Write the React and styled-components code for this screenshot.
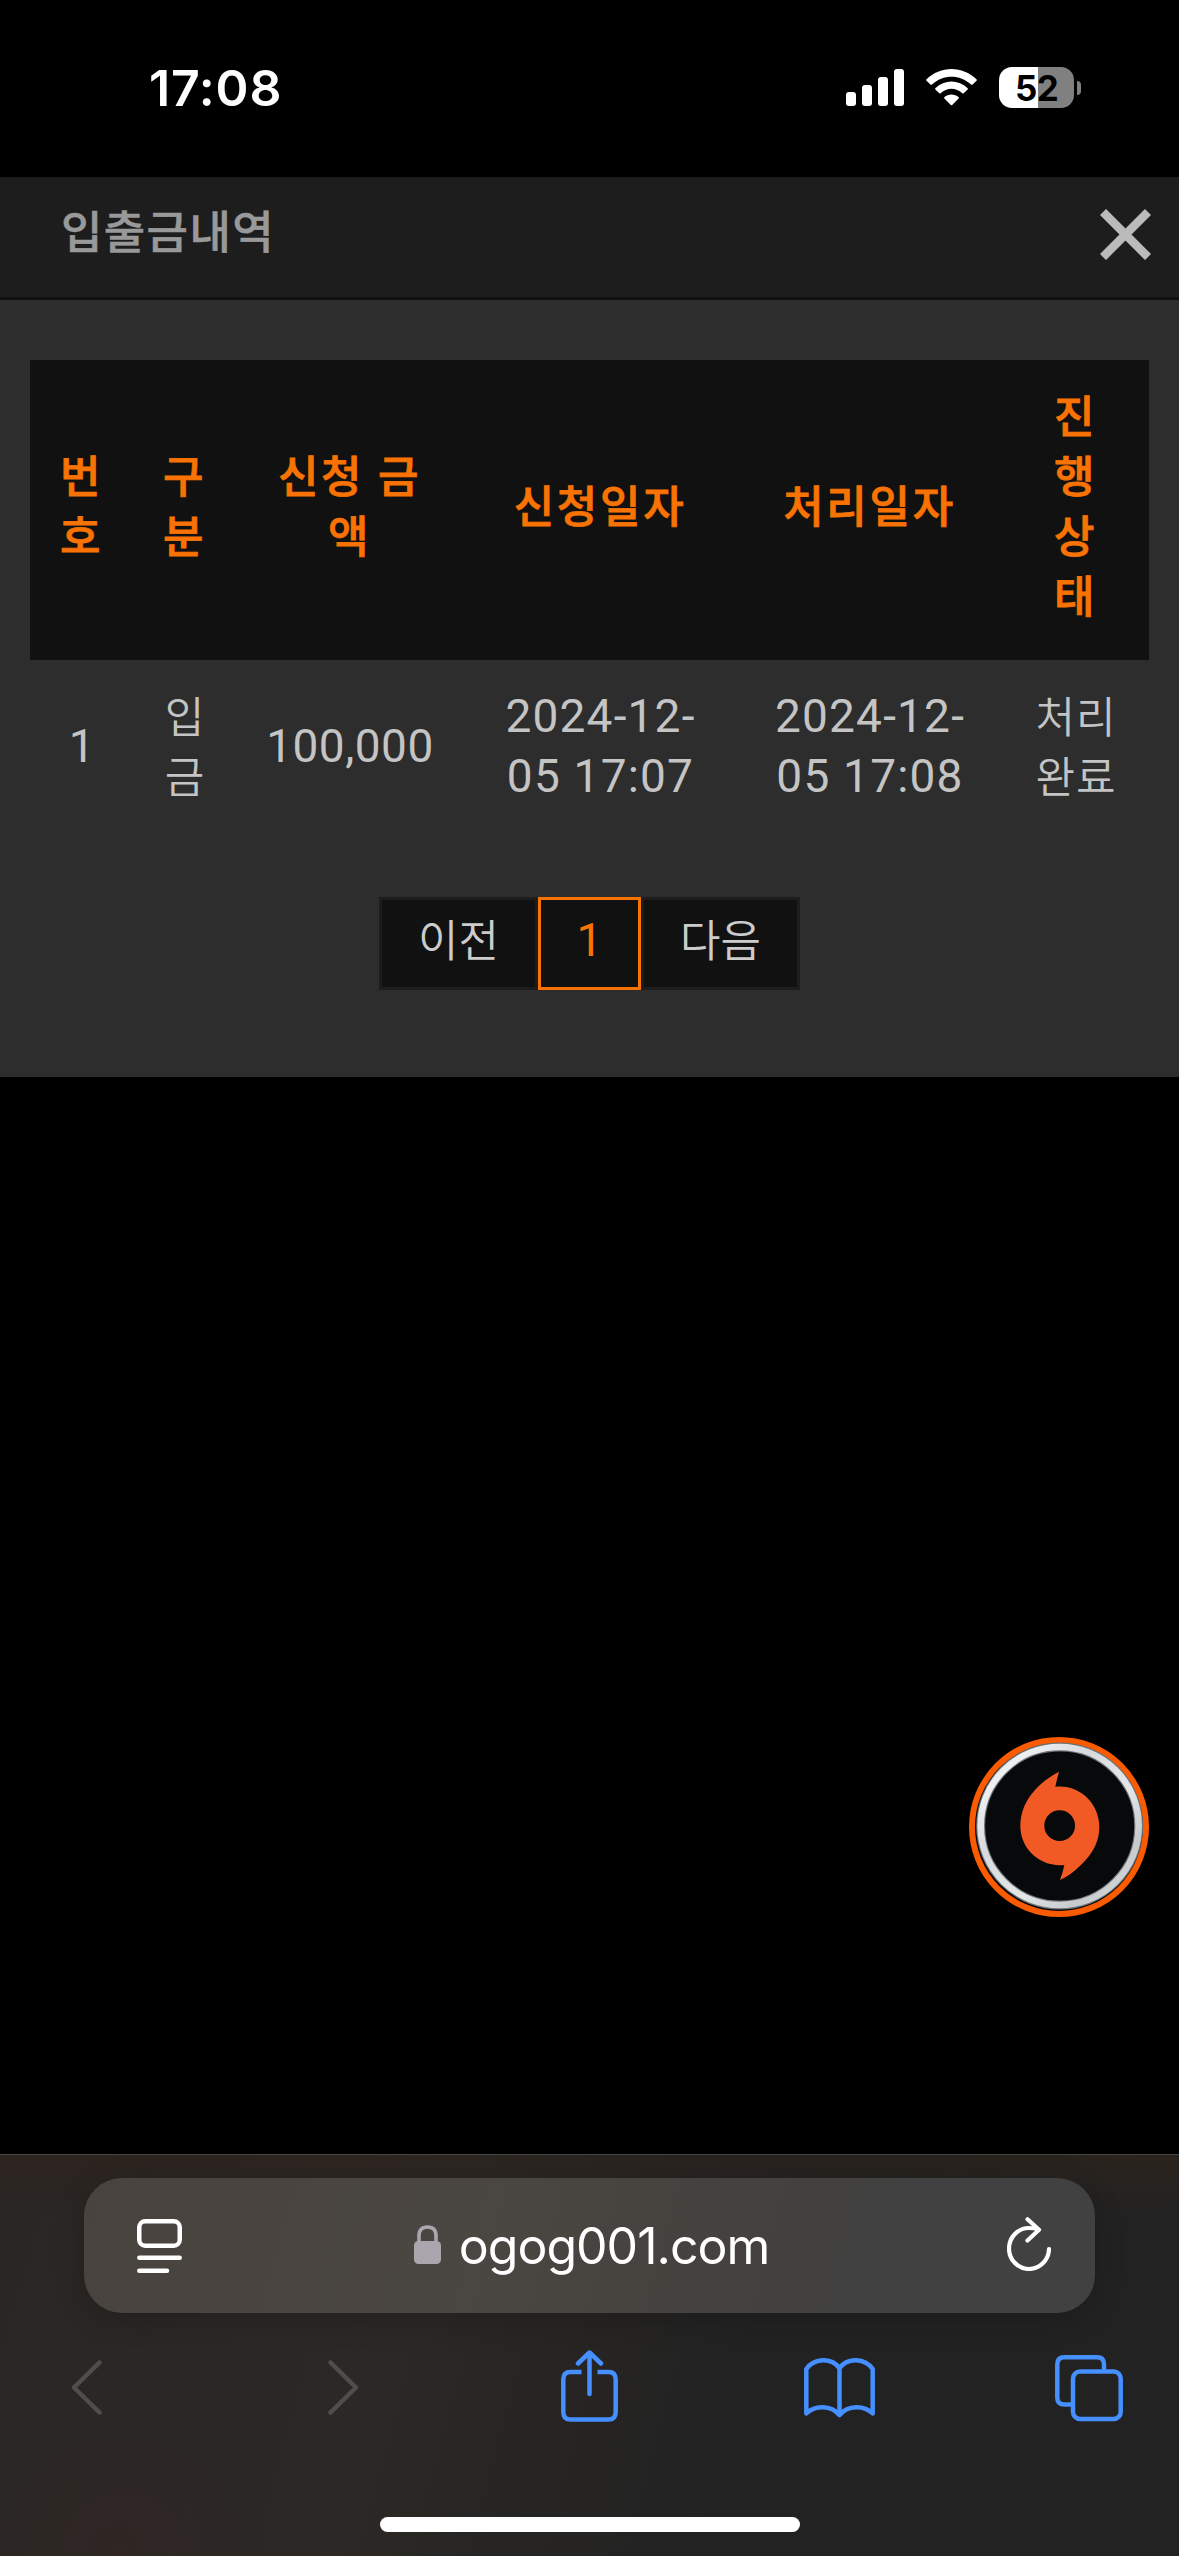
import React from "react";
import styled, { createGlobalStyle } from "styled-components";

const GlobalStyle = createGlobalStyle`
  * { box-sizing: border-box; }
  html, body { margin: 0; background: #000; }
  svg { display: block; }
`;

const Screen = styled.div`
  position: relative;
  display: flex;
  flex-direction: column;
  width: 1179px;
  height: 2556px;
  overflow: hidden;
  background: #000;
  font-family: Roboto, "Noto Sans CJK KR", sans-serif;
`;

/* ---------- status bar ---------- */
const StatusBar = styled.div`
  display: flex;
  justify-content: space-between;
  flex: none;
  height: 177px;
  padding: 67px 98px 0 149px;
`;

const Clock = styled.div`
  font: 600 50px/42px Inter, sans-serif;
  letter-spacing: 0.8px;
  color: #fff;
`;

const StatusIcons = styled.div`
  display: flex;
  align-items: flex-start;
  height: 41px;
`;

const SignalIcon = styled.svg`
  width: 58px;
  height: 41px;
  margin-right: 22px;
`;

const WifiIcon = styled.svg`
  width: 51px;
  height: 41px;
  margin-right: 22px;
`;

const Battery = styled.div`
  width: 75px;
  height: 41px;
  border-radius: 13px;
  background: linear-gradient(90deg, #fff 39px, #808080 39px);
  font: 700 35px/42px Inter, sans-serif;
  letter-spacing: -0.8px;
  text-align: center;
  color: #000;
`;

const BatteryTip = styled.div`
  width: 4px;
  height: 14px;
  margin: 14px 0 0 3px;
  border-radius: 0 4px 4px 0;
  background: #808080;
`;

/* ---------- page ---------- */
const Header = styled.header`
  display: flex;
  align-items: center;
  justify-content: space-between;
  flex: none;
  height: 123px;
  padding: 0 28px 6px 61px;
  border-bottom: 3px solid #111;
  background: #1d1d1d;
`;

const Title = styled.h1`
  margin: 0;
  font-size: 45px;
  font-weight: 500;
  line-height: 60px;
  letter-spacing: 1.4px;
  color: #999;
  -webkit-text-stroke: 0.5px #999;
`;

const CloseIcon = styled.svg`
  width: 51px;
  height: 51px;
`;

const Panel = styled.main`
  flex: none;
  height: 777px;
  padding: 60px 30px 0;
  background: #2d2d2d;
`;

const Table = styled.table`
  width: 1119px;
  table-layout: fixed;
  border-collapse: collapse;
  text-align: center;
  line-height: 60px;
`;

const Line = styled.div`
  white-space: nowrap;
`;

const HeadCell = styled.th`
  padding: 28px 0 32px 1px;
  background: #111;
  color: #f97304;
  font-size: 44px;
  font-weight: 500;
  letter-spacing: 2.7px;
  -webkit-text-stroke: 0.8px #f97304;
`;

const spacing = { hangul: "1px", amount: "0.5px", date: "1.2px" };

const Cell = styled.td`
  padding: ${(p) => (p.$kind === "hangul" ? "28px 0 32px 2px" : "26px 0 34px 2px")};
  color: #c4c4c4;
  font-size: ${(p) => (p.$kind === "hangul" ? 43 : 46)}px;
  font-weight: ${(p) => (p.$kind === "hangul" ? 350 : 400)};
  letter-spacing: ${(p) => spacing[p.$kind]};
`;

const Pagination = styled.nav`
  display: flex;
  justify-content: center;
  margin-top: 57px;
`;

const PageButton = styled.button`
  width: ${(p) => (p.$active ? 103 : 159)}px;
  height: 93px;
  padding: 0 0 ${(p) => (p.$active ? 7 : 3)}px;
  border: 3px solid ${(p) => (p.$active ? "#f97304" : "#1d1d1d")};
  background: #111;
  color: ${(p) => (p.$active ? "#f97304" : "#ccc")};
  font-family: inherit;
  font-size: ${(p) => (p.$active ? 46 : 44)}px;
  font-weight: ${(p) => (p.$active ? 400 : 350)};
  line-height: 60px;
`;

/* ---------- floating button ---------- */
const FloatingButton = styled.button`
  position: absolute;
  top: 1737px;
  left: 969px;
  width: 180px;
  height: 180px;
  padding: 0;
  border: 0;
  border-radius: 50%;
  background: none;
`;

/* ---------- browser chrome ---------- */
const BrowserBar = styled.footer`
  flex: none;
  height: 402px;
  margin-top: auto;
  border-top: 1px solid #474441;
  background:
    radial-gradient(circle 150px at 120px 400px, rgba(54, 38, 37, 0.5), transparent),
    radial-gradient(ellipse 1000px 60px at 100px 0, rgba(48, 34, 26, 0.5), transparent),
    radial-gradient(ellipse 700px 60px at 1179px 0, rgba(48, 36, 26, 0.6), transparent),
    linear-gradient(105deg, #292624 0%, #2b2825 35%, #222 62%, #222 100%);
`;

const AddressBar = styled.div`
  display: flex;
  align-items: center;
  justify-content: space-between;
  width: 1011px;
  height: 135px;
  margin: 23px 84px 0;
  padding: 0 44px 0 53px;
  border-radius: 38px;
  background: linear-gradient(105deg, #48433f 0%, #4a4641 40%, #45413e 60%, #414141 78%);
  box-shadow: 0 6px 30px rgba(0, 0, 0, 0.2);
`;

const Site = styled.div`
  display: flex;
  align-items: center;
  gap: 18px;
  margin-right: 6px;
  color: #fff;
  font: 400 50px/60px Inter, sans-serif;
  letter-spacing: -1px;
`;

const Glyph = styled.svg`
  width: ${(p) => p.$w}px;
  height: ${(p) => p.$h}px;
  margin-top: ${(p) => p.$top || 0}px;
  fill: none;
  stroke: ${(p) => p.$color || "#fff"};
  stroke-width: ${(p) => p.$stroke || 4.5};
  stroke-linecap: round;
  stroke-linejoin: round;
`;

const Toolbar = styled.div`
  display: grid;
  grid-template-columns: 257px 233px 243px 251px 68px;
  height: 74px;
  margin: 36px 0 0 71px;
`;

const HomeIndicator = styled.div`
  width: 420px;
  height: 15px;
  margin: 94px 0 0 380px;
  border-radius: 8px;
  background: #fff;
`;

const columns = [
  { width: 102, kind: "amount", head: ["번", "호"] },
  { width: 104, kind: "hangul", head: ["구", "분"] },
  { width: 226, kind: "amount", head: ["신청 금", "액"] },
  { width: 275, kind: "date", head: ["신청일자"] },
  { width: 264, kind: "date", head: ["처리일자"] },
  { width: 148, kind: "hangul", head: ["진", "행", "상", "태"] },
];

const rows = [
  [["1"], ["입", "금"], ["100,000"], ["2024-12-", "05 17:07"], ["2024-12-", "05 17:08"], ["처리", "완료"]],
];

const renderLines = (lines) => lines.map((line, i) => <Line key={i}>{line}</Line>);

export default function App() {
  return (
    <Screen>
      <GlobalStyle />
      <StatusBar>
        <Clock>17:08</Clock>
        <StatusIcons>
          <SignalIcon viewBox="846 67 58 41" fill="#fff">
            <rect x="846" y="92" width="10" height="14" rx="3" />
            <rect x="862" y="85" width="10" height="21" rx="3" />
            <rect x="878" y="77" width="10" height="29" rx="3" />
            <rect x="894" y="69" width="10" height="37" rx="3" />
          </SignalIcon>
          <WifiIcon viewBox="926 67 51 41" fill="#fff">
            <path d="M926.3 79.5C940.5 65.5 962.5 65.5 976.7 79.5Q977 80.3 976.5 80.8L972.6 84.6Q971.6 85 971 84.5C960 74 943 74 932 84.5Q931.4 85 930.4 84.6L926.5 80.8Q926 80.3 926.3 79.5Z" />
            <path d="M935.3 88.3C944.5 79.3 958.5 79.3 967.7 88.3Q968.2 89 967.6 89.5L963.7 93.3Q963 93.8 962.3 93.2C956 87.2 947 87.2 940.7 93.2Q940 93.8 939.3 93.3L935.4 89.5Q934.8 89 935.3 88.3Z" />
            <path d="M944.3 97.3C948.3 93.5 954.7 93.5 958.7 97.3Q959.2 98 958.6 98.6L952.2 105Q951.5 105.7 950.8 105L944.4 98.6Q943.8 98 944.3 97.3Z" />
          </WifiIcon>
          <Battery>52</Battery>
          <BatteryTip />
        </StatusIcons>
      </StatusBar>

      <Header>
        <Title>입출금내역</Title>
        <CloseIcon viewBox="0 0 51 51" stroke="#bbb" strokeWidth="8.5">
          <path d="M3 3L48 48M48 3L3 48" />
        </CloseIcon>
      </Header>

      <Panel>
        <Table>
          <colgroup>
            {columns.map((c, i) => (
              <col key={i} width={c.width} />
            ))}
          </colgroup>
          <thead>
            <tr>
              {columns.map((c, i) => (
                <HeadCell key={i}>{renderLines(c.head)}</HeadCell>
              ))}
            </tr>
          </thead>
          <tbody>
            {rows.map((row, r) => (
              <tr key={r}>
                {row.map((lines, i) => (
                  <Cell key={i} $kind={columns[i].kind}>
                    {renderLines(lines)}
                  </Cell>
                ))}
              </tr>
            ))}
          </tbody>
        </Table>
        <Pagination>
          <PageButton>이전</PageButton>
          <PageButton $active>1</PageButton>
          <PageButton>다음</PageButton>
        </Pagination>
      </Panel>

      <FloatingButton aria-label="menu">
        <svg width="180" height="180" viewBox="88 81 540 540">
          <defs>
            <linearGradient id="silver" x1="0" y1="0" x2="1" y2="1">
              <stop offset="0" stopColor="#c9ced2" />
              <stop offset="0.15" stopColor="#eef0f2" />
              <stop offset="0.35" stopColor="#d6dade" />
              <stop offset="0.6" stopColor="#e4e7ea" />
              <stop offset="0.8" stopColor="#c6cacd" />
              <stop offset="1" stopColor="#e2e5e8" />
            </linearGradient>
          </defs>
          <circle cx="358" cy="351" r="261" fill="#060809" stroke="#fa5b00" strokeWidth="18" />
          <circle cx="360" cy="348" r="237" fill="#07090a" stroke="#6f7376" strokeWidth="27" />
          <circle cx="360" cy="348" r="237" fill="none" stroke="url(#silver)" strokeWidth="20" />
          <path
            fill="#f15a24"
            fillRule="evenodd"
            d="M358 185Q352 206 347 230C420 222 479 280 479 350C479 392 462 423 438 450C416 475 390 497 361 510Q369 489 374 465C299 472 242 415 242 348C242 305 259 270 286 240C308 215 334 198 358 185ZM360 301A46 46 0 1 0 360 393A46 46 0 1 0 360 301Z"
          />
        </svg>
      </FloatingButton>

      <BrowserBar>
        <AddressBar>
          <Glyph $w={45} $h={54} viewBox="0 0 45 54">
            <rect x="2.25" y="2.25" width="40.5" height="24.5" rx="6" />
            <path d="M2.3 38.7H42.7M2.3 51.7H30" />
          </Glyph>
          <Site>
            <Glyph $w={27} $h={39} $top={-3} $color="#a9a7ad" viewBox="0 0 27 39">
              <path d="M5 18V11Q5 2 13.5 2T22 11V18" strokeWidth="3.6" />
              <rect x="0" y="16" width="27" height="23" rx="4.5" fill="#a9a7ad" stroke="none" />
            </Glyph>
            <span>ogog001.com</span>
          </Site>
          <Glyph $w={44} $h={54} $top={-4} $stroke={4.2} viewBox="0 0 44 54">
            <path d="M31.5 12.5Q27 11 22 11A20 20.5 0 1 0 42 32M20.5 2.3L32 12.8L20.5 23.5" />
          </Glyph>
        </AddressBar>
        <Toolbar>
          <Glyph $w={31} $h={55} $top={11} $color="#504d4b" viewBox="0 0 31 55">
            <path d="M28.5 2.5L3 27.5L28.5 52.5" />
          </Glyph>
          <Glyph $w={31} $h={55} $top={11} $color="#504d4b" viewBox="0 0 31 55">
            <path d="M2.5 2.5L28 27.5L2.5 52.5" />
          </Glyph>
          <Glyph $w={57} $h={72} $top={1} $color="#458fff" viewBox="0 0 57 72">
            <path d="M20.5 22H9.5Q2.3 22 2.3 29.5V62Q2.3 69.6 9.5 69.6H47.5Q54.7 69.6 54.7 62V29.5Q54.7 22 47.5 22H36.5" strokeLinecap="butt" />
            <path d="M28.5 44V3M17 13.5L28.5 2.5L40 13.5" />
          </Glyph>
          <Glyph $w={71} $h={60} $top={9} $color="#458fff" viewBox="0 0 71 60">
            <path d="M2.3 11C10 0 27 -1 35.5 10C44 -1 61 0 68.7 11V55.5C60 47 44 47 35.5 57C27 47 11 47 2.3 55.5ZM35.5 10V57" />
          </Glyph>
          <Glyph $w={68} $h={67} $top={6} $color="#458fff" viewBox="0 0 68 67">
            <path d="M49 15.5V9.5Q49 2.3 42 2.3H9.3Q2.3 2.3 2.3 9.5V42.5Q2.3 49.5 9.3 49.5H16" strokeLinecap="butt" />
            <rect x="18" y="16.5" width="47.7" height="47.5" rx="7" />
          </Glyph>
        </Toolbar>
        <HomeIndicator />
      </BrowserBar>
    </Screen>
  );
}
